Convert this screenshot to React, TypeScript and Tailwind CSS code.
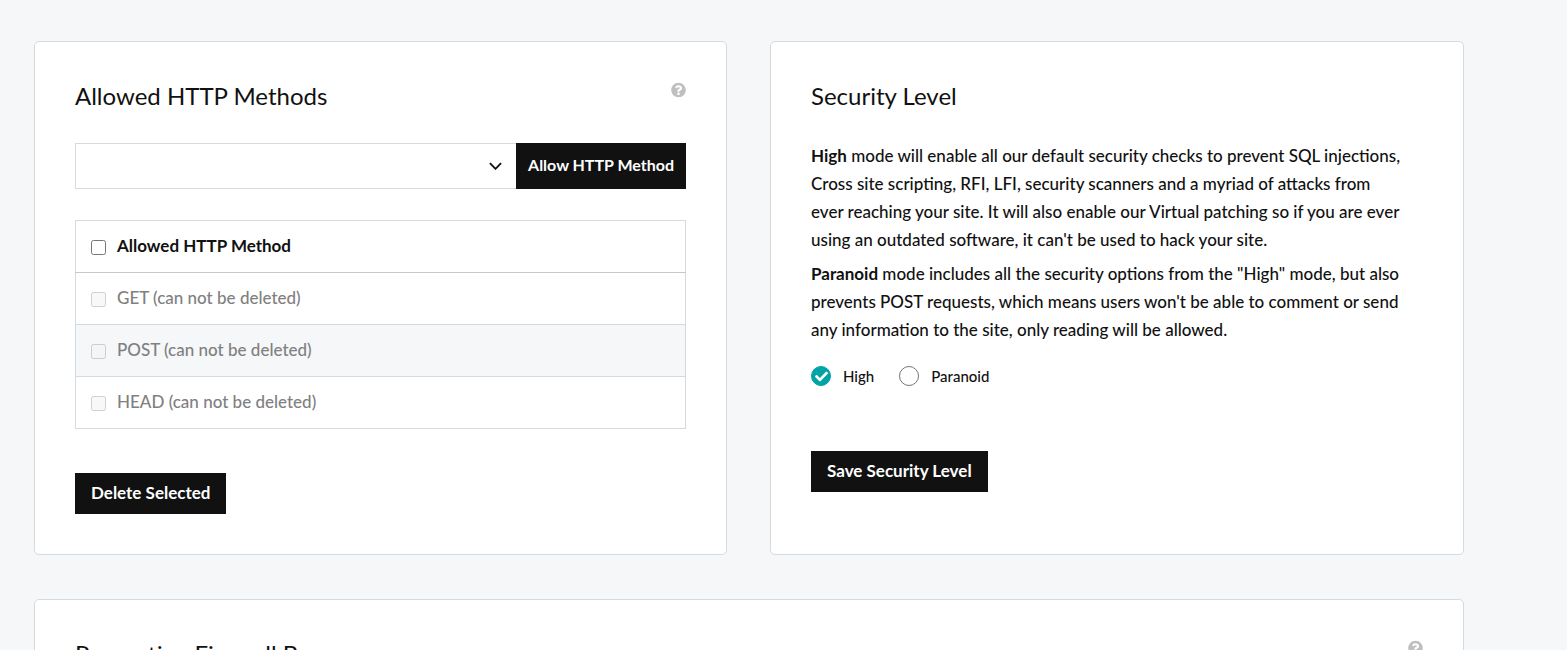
import React, { useState } from 'react';
import { FaCheck, FaQuestionCircle } from 'react-icons/fa';

interface CardProps {
  title: string;
  help?: boolean;
  children?: React.ReactNode;
}

const METHODS = ['GET', 'POST', 'HEAD'];

const Card: React.FC<CardProps> = ({ title, help, children }) => (
  <section className="rounded-[5px] border border-[#d4dbe0] bg-white px-10 pt-9 pb-10">
    <div className="flex items-start justify-between">
      <h2 className="text-[24px] leading-9 font-normal">{title}</h2>
      {help && (
        <button type="button" aria-label={`Help: ${title}`} className="mt-1 text-[#bfbfbf]">
          <FaQuestionCircle className="h-4 w-[15px]" />
        </button>
      )}
    </div>
    {children}
  </section>
);

const AllowedMethods: React.FC = () => (
  <Card title="Allowed HTTP Methods" help>
    <div className="mt-[29px] flex h-[46px]">
      <div className="relative flex-1">
        <select
          aria-label="HTTP method"
          className="h-full w-full appearance-none border border-r-0 border-[#d4dbe0] bg-white px-4"
        >
          <option value=""></option>
        </select>
        <svg
          className="pointer-events-none absolute top-[19px] right-[14px] h-2 w-[13px]"
          viewBox="0 0 14 8"
          fill="none"
          stroke="#111111"
          strokeWidth="2"
        >
          <path d="M1 1l6 6 6-6" />
        </svg>
      </div>
      <button type="button" className="bg-[#111111] px-3 pb-[2px] text-[16px] font-bold text-white">
        Allow HTTP Method
      </button>
    </div>

    <table className="mt-[31px] w-full border-collapse border border-[#d4dbe0] text-left text-[17px]">
      <thead>
        <tr className="h-[52px] border-b border-[#c8c8c8]">
          <th className="px-[15px] pt-0 pb-[2px] font-bold">
            <label className="flex items-center gap-[11px]">
              <input type="checkbox" className="mt-1 h-[15px] w-[15px]" />
              Allowed HTTP Method
            </label>
          </th>
        </tr>
      </thead>
      <tbody>
        {METHODS.map((method) => (
          <tr key={method} className="h-[52px] border-b border-[#d4dbe0] even:bg-[#f5f7f9]">
            <td className="px-[15px] pt-0 pb-[2px] font-medium text-[#808080]">
              <label className="flex items-center gap-[11px]">
                <input type="checkbox" disabled className="mt-1 h-[15px] w-[15px]" />
                {method} (can not be deleted)
              </label>
            </td>
          </tr>
        ))}
      </tbody>
    </table>

    <button type="button" className="mt-11 h-[41px] bg-[#111111] px-4 pb-[2px] text-[17px] font-bold text-white">
      Delete Selected
    </button>
  </Card>
);

const SecurityLevel: React.FC = () => {
  const [level, setLevel] = useState('High');

  return (
    <Card title="Security Level">
      <div className="mt-7 space-y-[6px] pr-[18px] text-[17px] leading-7 font-medium">
        <p>
          <strong>High</strong> mode will enable all our default security checks to prevent SQL injections,
          Cross site scripting, RFI, LFI, security scanners and a myriad of attacks from ever reaching your
          site. It will also enable our Virtual patching so if you are ever using an outdated software, it
          can't be used to hack your site.
        </p>
        <p>
          <strong>Paranoid</strong> mode includes all the security options from the "High" mode, but also
          prevents POST requests, which means users won't be able to comment or send any information to the
          site, only reading will be allowed.
        </p>
      </div>

      <div className="mt-5 flex gap-[25px]">
        {['High', 'Paranoid'].map((option) => (
          <label key={option} className="flex items-center gap-3 text-[15px] leading-6 font-medium">
            <span className="relative grid h-5 w-5 place-items-center">
              <input
                type="radio"
                name="level"
                value={option}
                checked={level === option}
                onChange={() => setLevel(option)}
                className="h-5 w-5 appearance-none rounded-full border border-[#767676] checked:border-[#00a4a6] checked:bg-[#00a4a6]"
              />
              {level === option && <FaCheck className="pointer-events-none absolute h-[13px] w-[13px] text-white" />}
            </span>
            {option}
          </label>
        ))}
      </div>

      <button type="button" className="mt-[63px] h-[41px] bg-[#111111] px-4 pb-[2px] text-[17px] font-bold text-white">
        Save Security Level
      </button>
    </Card>
  );
};

export default function App() {
  return (
    <main className="h-screen overflow-hidden bg-[#f5f7f9] pt-[41px] pr-[103px] pl-[34px] font-['Lato',sans-serif] text-[#111111]">
      <div className="grid grid-cols-[693fr_694fr] gap-x-[43px] gap-y-11">
        <AllowedMethods />
        <SecurityLevel />
        <div className="col-span-2">
          <Card title="Preventing Firewall Bypass" help />
        </div>
      </div>
    </main>
  );
}
